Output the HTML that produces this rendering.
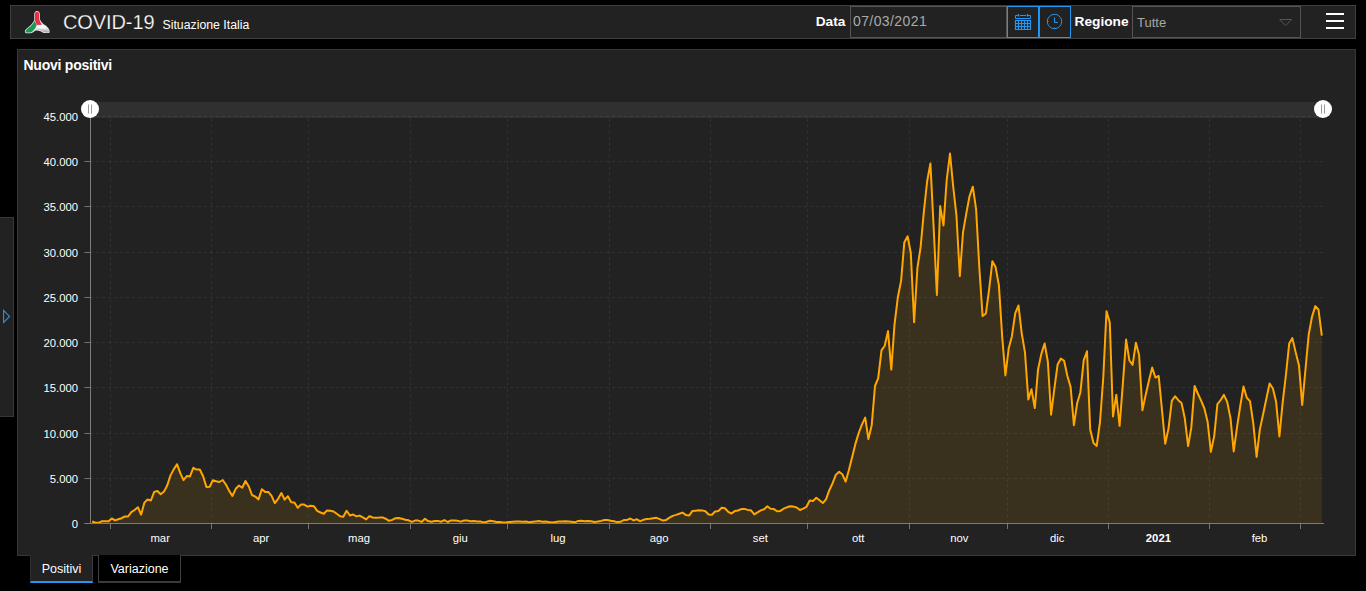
<!DOCTYPE html>
<html lang="it">
<head>
<meta charset="utf-8">
<title>COVID-19 Situazione Italia</title>
<style>
html,body{margin:0;padding:0;background:#000;}
body{width:1366px;height:591px;position:relative;overflow:hidden;font-family:"Liberation Sans",sans-serif;color:#fff;}
.abs{position:absolute;box-sizing:border-box;}
#header{left:10px;top:5px;width:1346px;height:34px;background:#222;border:1px solid #3f3f3f;}
#panel{left:17px;top:49px;width:1339px;height:507px;background:#222;border:1px solid #383838;}
#title{left:63px;top:10px;font-size:20px;line-height:24px;white-space:nowrap;color:#fff;-webkit-text-stroke:0.25px #222;letter-spacing:-0.1px;}
#subtitle{left:162.5px;top:18px;font-size:12.3px;line-height:14px;white-space:nowrap;}
.lbl{font-weight:bold;font-size:13.7px;line-height:16px;white-space:nowrap;}
#ldata{left:815.7px;top:14px;}
#lreg{left:1074.6px;top:14px;}
#inp{left:850px;top:6px;width:157px;height:32px;border:1px solid #555;background:#222;color:#aaa;font-size:14px;line-height:29px;padding-left:2px;letter-spacing:0.4px;}
.btn{top:6px;width:32px;height:32px;border:1px solid #2196f3;background:#222;}
#sel{left:1132px;top:6px;width:169px;height:32px;border:1px solid #555;background:#222;color:#a8a8a8;font-size:13px;line-height:32px;padding-left:4px;}
#ptitle{left:23.5px;top:56.8px;font-weight:bold;font-size:14px;line-height:16px;letter-spacing:-0.24px;white-space:nowrap;}
svg.chart{position:absolute;left:0;top:0;}
.g{stroke:#fff;stroke-opacity:.072;stroke-width:1;stroke-dasharray:3 3;}
.t{stroke:#747474;stroke-width:1;}
.ax{stroke:#7c7c7c;stroke-width:1;}
.yl{font-family:"Liberation Sans",sans-serif;font-size:11.3px;fill:#fff;text-anchor:end;}
.xl{font-family:"Liberation Sans",sans-serif;font-size:11.3px;fill:#fff;text-anchor:middle;}
.xl.b{font-weight:bold;}
#tab1{left:30px;top:555px;width:63px;height:28px;background:#222;border-left:1px solid #2c2c2c;border-right:1px solid #3c3c3c;border-bottom:2px solid #2196f3;font-size:12.5px;line-height:28px;text-align:center;}
#tab2{left:98px;top:555px;width:83px;height:28px;background:#000;border:1px solid #414141;border-top:none;border-bottom:2px solid #3a3a3a;font-size:12.5px;line-height:28px;text-align:center;}
#side{left:0;top:217px;width:14px;height:200px;background:#222;border:1px solid #383838;border-left:none;}
</style>
</head>
<body>
<div id="header" class="abs"></div>
<svg class="abs" style="left:20px;top:6px" width="36" height="32" viewBox="0 0 665 591">
  <defs><linearGradient id="wg" x1="0" y1="0" x2="0.3" y2="1"><stop offset="0" stop-color="#ffffff"/><stop offset="0.55" stop-color="#f2f2f2"/><stop offset="1" stop-color="#b9b9b9"/></linearGradient></defs>
  <path d="M315,90 C347,90 367,115 367,150 L370,250 C387,290 420,328 452,348 C502,375 548,430 548,470 C548,492 537,502 515,500 L430,497 C400,472 350,448 290,452 C260,472 230,497 200,502 L115,502 C93,500 85,480 93,453 C103,428 140,398 180,368 C215,338 245,300 263,262 L263,150 C263,115 283,90 315,90 Z" fill="#e4e4e4"/>
  <path d="M315,106 C340,106 354,126 354,150 L357,254 C369,290 388,320 404,345 L312,350 C300,320 286,292 276,268 L276,150 C276,126 290,106 315,106Z" fill="#ea2f4b"/>
  <path d="M271,278 C284,302 297,327 307,354 C295,387 280,415 262,436 C240,465 215,484 195,489 L120,489 C106,487 101,475 109,458 C121,436 150,411 186,384 C221,356 250,316 271,278Z" fill="#199a4f"/>
  <path d="M318,358 L408,352 C430,355 455,365 475,385 C505,410 536,445 536,470 C536,485 528,490 515,488 L436,485 C400,456 345,436 281,439 C296,415 308,386 318,358Z" fill="url(#wg)"/>
  <path d="M300,428 C365,418 435,436 492,482" fill="none" stroke="#9c9c9c" stroke-width="14" stroke-opacity="0.7"/>
</svg>
<div id="title" class="abs">COVID-19</div>
<div id="subtitle" class="abs">Situazione Italia</div>
<div id="ldata" class="abs lbl">Data</div>
<div id="inp" class="abs">07/03/2021</div>
<div class="abs btn" style="left:1007px"></div>
<div class="abs btn" style="left:1039px"></div>
<svg class="abs" style="left:1014px;top:13px" width="18" height="18" viewBox="0 0 18 18" fill="none" stroke="#2196f3" stroke-width="1">
  <path d="M4 2.5H1.5V5.5H16.500V2.500H14M6 2.500H12" />
  <path d="M4.500 1V3.500M13.500 1V3.500" stroke-width="1.4"/>
  <path d="M1.500 7.500H16.500V16.500H1.500ZM1.500 10.500H16.500M1.500 13.500H16.500M4.500 7.500V16.500M7.500 7.500V16.500M10.500 7.500V16.500M13.500 7.500V16.500" stroke-width="1.2"/>
</svg>
<svg class="abs" style="left:1046px;top:13px" width="18" height="18" viewBox="0 0 18 18" fill="none" stroke="#2196f3" stroke-width="1">
  <circle cx="8.500" cy="8.500" r="7.200"/>
  <path d="M8.500 4.500V9.500H12" />
  <path d="M8.500 14.500V15.700M1.300 8.500H2.500" />
</svg>
<div id="lreg" class="abs lbl">Regione</div>
<div id="sel" class="abs">Tutte</div>
<svg class="abs" style="left:1278px;top:17px" width="16" height="10" viewBox="0 0 16 10" fill="none" stroke="#555" stroke-width="1"><path d="M1.700 2.500H13.700L7.700 8.600Z"/></svg>
<div class="abs" style="left:1326px;top:13px;width:18px;height:2px;background:#fff"></div>
<div class="abs" style="left:1326px;top:20px;width:18px;height:2px;background:#fff"></div>
<div class="abs" style="left:1326px;top:27px;width:18px;height:2px;background:#fff"></div>
<div id="panel" class="abs"></div>
<div id="ptitle" class="abs">Nuovi positivi</div>
<svg class="chart" width="1366" height="591" viewBox="0 0 1366 591">
<rect x="90" y="102" width="1233" height="16" fill="#303030"/>
<line x1="84.5" x2="90" y1="523.5" y2="523.5" class="t"/>
<text x="78" y="528.0" class="yl">0</text>
<line x1="90" x2="1324" y1="478.5" y2="478.5" class="g"/>
<line x1="84.5" x2="90" y1="478.5" y2="478.5" class="t"/>
<text x="78" y="483.0" class="yl">5.000</text>
<line x1="90" x2="1324" y1="433.5" y2="433.5" class="g"/>
<line x1="84.5" x2="90" y1="433.5" y2="433.5" class="t"/>
<text x="78" y="438.0" class="yl">10.000</text>
<line x1="90" x2="1324" y1="387.5" y2="387.5" class="g"/>
<line x1="84.5" x2="90" y1="387.5" y2="387.5" class="t"/>
<text x="78" y="392.0" class="yl">15.000</text>
<line x1="90" x2="1324" y1="342.5" y2="342.5" class="g"/>
<line x1="84.5" x2="90" y1="342.5" y2="342.5" class="t"/>
<text x="78" y="347.0" class="yl">20.000</text>
<line x1="90" x2="1324" y1="297.5" y2="297.5" class="g"/>
<line x1="84.5" x2="90" y1="297.5" y2="297.5" class="t"/>
<text x="78" y="302.0" class="yl">25.000</text>
<line x1="90" x2="1324" y1="252.5" y2="252.5" class="g"/>
<line x1="84.5" x2="90" y1="252.5" y2="252.5" class="t"/>
<text x="78" y="257.0" class="yl">30.000</text>
<line x1="90" x2="1324" y1="206.5" y2="206.5" class="g"/>
<line x1="84.5" x2="90" y1="206.5" y2="206.5" class="t"/>
<text x="78" y="211.0" class="yl">35.000</text>
<line x1="90" x2="1324" y1="161.5" y2="161.5" class="g"/>
<line x1="84.5" x2="90" y1="161.5" y2="161.5" class="t"/>
<text x="78" y="166.0" class="yl">40.000</text>
<line x1="90" x2="1324" y1="116.5" y2="116.5" class="g"/>
<line x1="84.5" x2="90" y1="116.5" y2="116.5" class="t"/>
<text x="78" y="121.0" class="yl">45.000</text>
<line x1="110.5" x2="110.5" y1="118.6" y2="523" class="g"/>
<line x1="110.5" x2="110.5" y1="523" y2="529" class="t"/>
<line x1="211.5" x2="211.5" y1="118.6" y2="523" class="g"/>
<line x1="211.5" x2="211.5" y1="523" y2="529" class="t"/>
<line x1="308.5" x2="308.5" y1="118.6" y2="523" class="g"/>
<line x1="308.5" x2="308.5" y1="523" y2="529" class="t"/>
<line x1="410.5" x2="410.5" y1="118.6" y2="523" class="g"/>
<line x1="410.5" x2="410.5" y1="523" y2="529" class="t"/>
<line x1="507.5" x2="507.5" y1="118.6" y2="523" class="g"/>
<line x1="507.5" x2="507.5" y1="523" y2="529" class="t"/>
<line x1="609.5" x2="609.5" y1="118.6" y2="523" class="g"/>
<line x1="609.5" x2="609.5" y1="523" y2="529" class="t"/>
<line x1="710.5" x2="710.5" y1="118.6" y2="523" class="g"/>
<line x1="710.5" x2="710.5" y1="523" y2="529" class="t"/>
<line x1="807.5" x2="807.5" y1="118.6" y2="523" class="g"/>
<line x1="807.5" x2="807.5" y1="523" y2="529" class="t"/>
<line x1="909.5" x2="909.5" y1="118.6" y2="523" class="g"/>
<line x1="909.5" x2="909.5" y1="523" y2="529" class="t"/>
<line x1="1007.5" x2="1007.5" y1="118.6" y2="523" class="g"/>
<line x1="1007.5" x2="1007.5" y1="523" y2="529" class="t"/>
<line x1="1108.5" x2="1108.5" y1="118.6" y2="523" class="g"/>
<line x1="1108.5" x2="1108.5" y1="523" y2="529" class="t"/>
<line x1="1209.5" x2="1209.5" y1="118.6" y2="523" class="g"/>
<line x1="1209.5" x2="1209.5" y1="523" y2="529" class="t"/>
<line x1="1300.5" x2="1300.5" y1="118.6" y2="523" class="g"/>
<line x1="1300.5" x2="1300.5" y1="523" y2="529" class="t"/>
<text x="160.2" y="541.6" class="xl">mar</text>
<text x="261.2" y="541.6" class="xl">apr</text>
<text x="359.1" y="541.6" class="xl">mag</text>
<text x="460.2" y="541.6" class="xl">giu</text>
<text x="558.1" y="541.6" class="xl">lug</text>
<text x="659.2" y="541.6" class="xl">ago</text>
<text x="760.3" y="541.6" class="xl">set</text>
<text x="858.2" y="541.6" class="xl">ott</text>
<text x="959.4" y="541.6" class="xl">nov</text>
<text x="1057.3" y="541.6" class="xl">dic</text>
<text x="1158.4" y="541.6" class="xl b">2021</text>
<text x="1259.5" y="541.6" class="xl">feb</text>
<path d="M92.2,521.5 L95.5,522.7 L98.7,522.8 L102.0,521.2 L105.2,521.3 L108.5,521.3 L111.8,518.4 L115.0,520.4 L118.3,519.3 L121.6,518.2 L124.8,516.5 L128.1,516.5 L131.3,512.2 L134.6,510.0 L137.9,507.2 L141.1,514.7 L144.4,502.6 L147.6,499.5 L150.9,500.5 L154.2,491.9 L157.4,491.0 L160.7,494.3 L164.0,491.6 L167.2,485.5 L170.5,475.4 L173.7,469.4 L177.0,464.2 L180.3,473.2 L183.5,480.2 L186.8,476.0 L190.0,476.4 L193.3,467.8 L196.6,469.6 L199.8,469.5 L203.1,476.3 L206.4,486.9 L209.6,486.8 L212.9,480.2 L216.1,481.3 L219.4,482.0 L222.7,480.0 L225.9,484.5 L229.2,490.9 L232.4,496.0 L235.7,488.8 L239.0,485.5 L242.2,487.8 L245.5,481.0 L248.8,486.5 L252.0,495.0 L255.3,496.6 L258.5,499.4 L261.8,489.3 L265.1,491.9 L268.3,491.9 L271.6,495.9 L274.8,503.1 L278.1,498.8 L281.4,493.0 L284.6,499.6 L287.9,496.2 L291.2,502.2 L294.4,502.5 L297.7,507.8 L300.9,504.6 L304.2,504.6 L307.5,506.6 L310.7,505.7 L314.0,506.3 L317.2,510.9 L320.5,512.5 L323.8,513.8 L327.0,510.4 L330.3,510.8 L333.6,511.5 L336.8,513.7 L340.1,516.2 L343.3,516.8 L346.6,510.8 L349.9,515.5 L353.1,514.5 L356.4,516.4 L359.6,515.6 L362.9,517.4 L366.2,519.4 L369.4,516.1 L372.7,517.5 L376.0,517.7 L379.2,517.6 L382.5,517.4 L385.7,518.7 L389.0,520.8 L392.3,519.9 L395.5,518.2 L398.8,518.1 L402.0,518.8 L405.3,519.7 L408.6,520.3 L411.8,521.9 L415.1,520.6 L418.3,520.6 L421.6,521.9 L424.9,518.8 L428.1,521.1 L431.4,521.7 L434.7,521.0 L437.9,520.9 L441.2,521.7 L444.4,520.1 L447.7,522.0 L451.0,520.4 L454.2,520.4 L457.5,520.8 L460.7,521.6 L464.0,520.5 L467.3,520.5 L470.5,521.2 L473.8,521.1 L477.1,521.5 L480.3,521.5 L483.6,522.4 L486.8,521.8 L490.1,520.8 L493.4,521.2 L496.6,521.9 L499.9,521.9 L503.1,522.4 L506.4,522.2 L509.7,521.9 L512.9,521.7 L516.2,521.5 L519.5,521.4 L522.7,521.8 L526.0,521.6 L529.2,522.3 L532.5,521.8 L535.8,521.4 L539.0,521.0 L542.3,521.8 L545.5,521.4 L548.8,522.0 L552.1,522.5 L555.3,522.0 L558.6,521.4 L561.9,521.4 L565.1,521.2 L568.4,521.5 L571.6,521.8 L574.9,522.3 L578.2,520.9 L581.4,520.7 L584.7,521.2 L587.9,521.0 L591.2,521.2 L594.5,522.0 L597.7,521.6 L601.0,520.9 L604.3,520.0 L607.5,520.1 L610.8,520.8 L614.0,521.3 L617.3,522.1 L620.6,521.8 L623.8,520.0 L627.1,519.9 L630.3,518.5 L633.6,520.4 L636.9,519.3 L640.1,521.2 L643.4,519.8 L646.7,519.1 L649.9,518.8 L653.2,518.3 L656.4,517.8 L659.7,519.2 L663.0,520.6 L666.2,519.9 L669.5,517.7 L672.7,515.9 L676.0,514.9 L679.3,513.8 L682.5,512.6 L685.8,514.9 L689.1,515.6 L692.3,511.1 L695.6,510.7 L698.8,510.3 L702.1,510.4 L705.4,511.2 L708.6,514.5 L711.9,514.7 L715.1,511.5 L718.4,510.9 L721.7,507.8 L724.9,508.2 L728.2,511.8 L731.5,513.5 L734.7,511.1 L738.0,510.5 L741.2,509.1 L744.5,508.9 L747.8,509.9 L751.0,510.3 L754.3,514.4 L757.5,512.4 L760.8,510.4 L764.1,509.2 L767.3,506.3 L770.6,508.7 L773.9,509.1 L777.1,511.3 L780.4,510.9 L783.6,508.7 L786.9,507.3 L790.2,506.2 L793.4,506.6 L796.7,507.5 L799.9,510.0 L803.2,508.6 L806.5,506.8 L809.7,500.5 L813.0,500.9 L816.3,497.8 L819.5,500.2 L822.8,503.1 L826.0,499.3 L829.3,490.2 L832.6,483.2 L835.8,474.9 L839.1,471.7 L842.3,474.2 L845.6,481.7 L848.9,470.1 L852.1,457.2 L855.4,443.9 L858.7,433.0 L861.9,424.7 L865.2,417.6 L868.4,439.0 L871.7,425.2 L875.0,386.0 L878.2,378.1 L881.5,350.4 L884.7,345.8 L888.0,331.1 L891.3,369.6 L894.5,324.6 L897.8,297.5 L901.1,280.8 L904.3,242.4 L907.6,236.3 L910.8,253.0 L914.1,322.2 L917.4,268.0 L920.6,247.2 L923.9,211.4 L927.1,181.5 L930.4,163.4 L933.7,228.5 L936.9,294.9 L940.2,206.1 L943.5,225.4 L946.7,180.0 L950.0,153.6 L953.2,186.5 L956.5,216.2 L959.8,276.1 L963.0,232.4 L966.3,213.4 L969.5,196.3 L972.8,186.7 L976.1,209.1 L979.3,267.2 L982.6,316.1 L985.9,313.4 L989.1,289.7 L992.4,261.2 L995.6,267.1 L998.9,285.4 L1002.2,336.8 L1005.4,375.4 L1008.7,348.5 L1011.9,336.2 L1015.2,313.4 L1018.5,305.5 L1021.7,333.1 L1025.0,352.7 L1028.3,399.4 L1031.5,389.3 L1034.8,408.1 L1038.0,369.8 L1041.3,354.1 L1044.6,343.5 L1047.8,361.3 L1051.1,414.7 L1054.3,389.2 L1057.6,364.6 L1060.9,358.6 L1064.1,360.8 L1067.4,376.0 L1070.6,386.9 L1073.9,425.2 L1077.2,403.0 L1080.4,392.2 L1083.7,360.3 L1087.0,351.3 L1090.2,429.4 L1093.5,442.9 L1096.7,445.9 L1100.0,422.0 L1103.3,377.0 L1106.5,311.2 L1109.8,322.6 L1113.0,416.5 L1116.3,394.7 L1119.6,425.8 L1122.8,384.4 L1126.1,339.6 L1129.4,360.5 L1132.6,364.9 L1135.9,342.8 L1139.1,355.0 L1142.4,410.2 L1145.7,394.7 L1148.9,380.8 L1152.2,367.5 L1155.4,377.5 L1158.7,376.0 L1162.0,410.0 L1165.2,443.7 L1168.5,428.6 L1171.8,400.8 L1175.0,396.2 L1178.3,400.2 L1181.5,402.9 L1184.8,418.3 L1188.1,446.1 L1191.3,427.7 L1194.6,386.0 L1197.8,393.5 L1201.1,400.7 L1204.4,408.5 L1207.6,421.7 L1210.9,451.8 L1214.2,436.1 L1217.4,404.2 L1220.7,400.0 L1223.9,394.9 L1227.2,401.9 L1230.5,418.2 L1233.7,451.4 L1237.0,427.4 L1240.2,406.3 L1243.5,386.5 L1246.8,397.7 L1250.0,401.1 L1253.3,423.4 L1256.6,457.0 L1259.8,429.6 L1263.1,414.3 L1266.3,399.0 L1269.6,383.5 L1272.9,388.5 L1276.1,401.8 L1279.4,436.4 L1282.6,403.1 L1285.9,375.0 L1289.2,343.6 L1292.4,338.1 L1295.7,352.4 L1299.0,365.6 L1302.2,404.9 L1305.5,369.0 L1308.7,334.6 L1312.0,316.7 L1315.3,306.1 L1318.5,309.7 L1321.8,335.7 L1321.8,523.5 L92.2,523.5 Z" fill="#ffa500" fill-opacity="0.11" stroke="none"/>
<clipPath id="plot"><rect x="90" y="100" width="1240" height="423.5"/></clipPath>
<path d="M92.2,521.5 L95.5,522.7 L98.7,522.8 L102.0,521.2 L105.2,521.3 L108.5,521.3 L111.8,518.4 L115.0,520.4 L118.3,519.3 L121.6,518.2 L124.8,516.5 L128.1,516.5 L131.3,512.2 L134.6,510.0 L137.9,507.2 L141.1,514.7 L144.4,502.6 L147.6,499.5 L150.9,500.5 L154.2,491.9 L157.4,491.0 L160.7,494.3 L164.0,491.6 L167.2,485.5 L170.5,475.4 L173.7,469.4 L177.0,464.2 L180.3,473.2 L183.5,480.2 L186.8,476.0 L190.0,476.4 L193.3,467.8 L196.6,469.6 L199.8,469.5 L203.1,476.3 L206.4,486.9 L209.6,486.8 L212.9,480.2 L216.1,481.3 L219.4,482.0 L222.7,480.0 L225.9,484.5 L229.2,490.9 L232.4,496.0 L235.7,488.8 L239.0,485.5 L242.2,487.8 L245.5,481.0 L248.8,486.5 L252.0,495.0 L255.3,496.6 L258.5,499.4 L261.8,489.3 L265.1,491.9 L268.3,491.9 L271.6,495.9 L274.8,503.1 L278.1,498.8 L281.4,493.0 L284.6,499.6 L287.9,496.2 L291.2,502.2 L294.4,502.5 L297.7,507.8 L300.9,504.6 L304.2,504.6 L307.5,506.6 L310.7,505.7 L314.0,506.3 L317.2,510.9 L320.5,512.5 L323.8,513.8 L327.0,510.4 L330.3,510.8 L333.6,511.5 L336.8,513.7 L340.1,516.2 L343.3,516.8 L346.6,510.8 L349.9,515.5 L353.1,514.5 L356.4,516.4 L359.6,515.6 L362.9,517.4 L366.2,519.4 L369.4,516.1 L372.7,517.5 L376.0,517.7 L379.2,517.6 L382.5,517.4 L385.7,518.7 L389.0,520.8 L392.3,519.9 L395.5,518.2 L398.8,518.1 L402.0,518.8 L405.3,519.7 L408.6,520.3 L411.8,521.9 L415.1,520.6 L418.3,520.6 L421.6,521.9 L424.9,518.8 L428.1,521.1 L431.4,521.7 L434.7,521.0 L437.9,520.9 L441.2,521.7 L444.4,520.1 L447.7,522.0 L451.0,520.4 L454.2,520.4 L457.5,520.8 L460.7,521.6 L464.0,520.5 L467.3,520.5 L470.5,521.2 L473.8,521.1 L477.1,521.5 L480.3,521.5 L483.6,522.4 L486.8,521.8 L490.1,520.8 L493.4,521.2 L496.6,521.9 L499.9,521.9 L503.1,522.4 L506.4,522.2 L509.7,521.9 L512.9,521.7 L516.2,521.5 L519.5,521.4 L522.7,521.8 L526.0,521.6 L529.2,522.3 L532.5,521.8 L535.8,521.4 L539.0,521.0 L542.3,521.8 L545.5,521.4 L548.8,522.0 L552.1,522.5 L555.3,522.0 L558.6,521.4 L561.9,521.4 L565.1,521.2 L568.4,521.5 L571.6,521.8 L574.9,522.3 L578.2,520.9 L581.4,520.7 L584.7,521.2 L587.9,521.0 L591.2,521.2 L594.5,522.0 L597.7,521.6 L601.0,520.9 L604.3,520.0 L607.5,520.1 L610.8,520.8 L614.0,521.3 L617.3,522.1 L620.6,521.8 L623.8,520.0 L627.1,519.9 L630.3,518.5 L633.6,520.4 L636.9,519.3 L640.1,521.2 L643.4,519.8 L646.7,519.1 L649.9,518.8 L653.2,518.3 L656.4,517.8 L659.7,519.2 L663.0,520.6 L666.2,519.9 L669.5,517.7 L672.7,515.9 L676.0,514.9 L679.3,513.8 L682.5,512.6 L685.8,514.9 L689.1,515.6 L692.3,511.1 L695.6,510.7 L698.8,510.3 L702.1,510.4 L705.4,511.2 L708.6,514.5 L711.9,514.7 L715.1,511.5 L718.4,510.9 L721.7,507.8 L724.9,508.2 L728.2,511.8 L731.5,513.5 L734.7,511.1 L738.0,510.5 L741.2,509.1 L744.5,508.9 L747.8,509.9 L751.0,510.3 L754.3,514.4 L757.5,512.4 L760.8,510.4 L764.1,509.2 L767.3,506.3 L770.6,508.7 L773.9,509.1 L777.1,511.3 L780.4,510.9 L783.6,508.7 L786.9,507.3 L790.2,506.2 L793.4,506.6 L796.7,507.5 L799.9,510.0 L803.2,508.6 L806.5,506.8 L809.7,500.5 L813.0,500.9 L816.3,497.8 L819.5,500.2 L822.8,503.1 L826.0,499.3 L829.3,490.2 L832.6,483.2 L835.8,474.9 L839.1,471.7 L842.3,474.2 L845.6,481.7 L848.9,470.1 L852.1,457.2 L855.4,443.9 L858.7,433.0 L861.9,424.7 L865.2,417.6 L868.4,439.0 L871.7,425.2 L875.0,386.0 L878.2,378.1 L881.5,350.4 L884.7,345.8 L888.0,331.1 L891.3,369.6 L894.5,324.6 L897.8,297.5 L901.1,280.8 L904.3,242.4 L907.6,236.3 L910.8,253.0 L914.1,322.2 L917.4,268.0 L920.6,247.2 L923.9,211.4 L927.1,181.5 L930.4,163.4 L933.7,228.5 L936.9,294.9 L940.2,206.1 L943.5,225.4 L946.7,180.0 L950.0,153.6 L953.2,186.5 L956.5,216.2 L959.8,276.1 L963.0,232.4 L966.3,213.4 L969.5,196.3 L972.8,186.7 L976.1,209.1 L979.3,267.2 L982.6,316.1 L985.9,313.4 L989.1,289.7 L992.4,261.2 L995.6,267.1 L998.9,285.4 L1002.2,336.8 L1005.4,375.4 L1008.7,348.5 L1011.9,336.2 L1015.2,313.4 L1018.5,305.5 L1021.7,333.1 L1025.0,352.7 L1028.3,399.4 L1031.5,389.3 L1034.8,408.1 L1038.0,369.8 L1041.3,354.1 L1044.6,343.5 L1047.8,361.3 L1051.1,414.7 L1054.3,389.2 L1057.6,364.6 L1060.9,358.6 L1064.1,360.8 L1067.4,376.0 L1070.6,386.9 L1073.9,425.2 L1077.2,403.0 L1080.4,392.2 L1083.7,360.3 L1087.0,351.3 L1090.2,429.4 L1093.5,442.9 L1096.7,445.9 L1100.0,422.0 L1103.3,377.0 L1106.5,311.2 L1109.8,322.6 L1113.0,416.5 L1116.3,394.7 L1119.6,425.8 L1122.8,384.4 L1126.1,339.6 L1129.4,360.5 L1132.6,364.9 L1135.9,342.8 L1139.1,355.0 L1142.4,410.2 L1145.7,394.7 L1148.9,380.8 L1152.2,367.5 L1155.4,377.5 L1158.7,376.0 L1162.0,410.0 L1165.2,443.7 L1168.5,428.6 L1171.8,400.8 L1175.0,396.2 L1178.3,400.2 L1181.5,402.9 L1184.8,418.3 L1188.1,446.1 L1191.3,427.7 L1194.6,386.0 L1197.8,393.5 L1201.1,400.7 L1204.4,408.5 L1207.6,421.7 L1210.9,451.8 L1214.2,436.1 L1217.4,404.2 L1220.7,400.0 L1223.9,394.9 L1227.2,401.9 L1230.5,418.2 L1233.7,451.4 L1237.0,427.4 L1240.2,406.3 L1243.5,386.5 L1246.8,397.7 L1250.0,401.1 L1253.3,423.4 L1256.6,457.0 L1259.8,429.6 L1263.1,414.3 L1266.3,399.0 L1269.6,383.5 L1272.9,388.5 L1276.1,401.8 L1279.4,436.4 L1282.6,403.1 L1285.9,375.0 L1289.2,343.6 L1292.4,338.1 L1295.7,352.4 L1299.0,365.6 L1302.2,404.9 L1305.5,369.0 L1308.7,334.6 L1312.0,316.7 L1315.3,306.1 L1318.5,309.7 L1321.8,335.7" fill="none" stroke="#ffa700" stroke-width="2" stroke-linejoin="round" clip-path="url(#plot)"/>
<line x1="90.5" x2="90.5" y1="118" y2="524" class="ax"/>
<line x1="84.5" x2="1324" y1="523.5" y2="523.5" class="ax"/>
<circle cx="90" cy="109" r="9" fill="#fff"/>
<path d="M88.5 104.5v9M91.5 104.5v9" stroke="#999" stroke-width="1" fill="none"/>
<circle cx="1323" cy="109" r="9" fill="#fff"/>
<path d="M1321.5 104.5v9M1324.5 104.5v9" stroke="#999" stroke-width="1" fill="none"/>
</svg>
<div id="tab1" class="abs">Positivi</div>
<div id="tab2" class="abs">Variazione</div>
<div id="side" class="abs"></div>
<svg class="abs" style="left:0;top:300px" width="14" height="32" viewBox="0 0 14 32" fill="none" stroke="#2196f3" stroke-width="1.1"><path d="M3.600 10.400L9.500 16.400L3.600 22.400Z"/></svg>
</body>
</html>
